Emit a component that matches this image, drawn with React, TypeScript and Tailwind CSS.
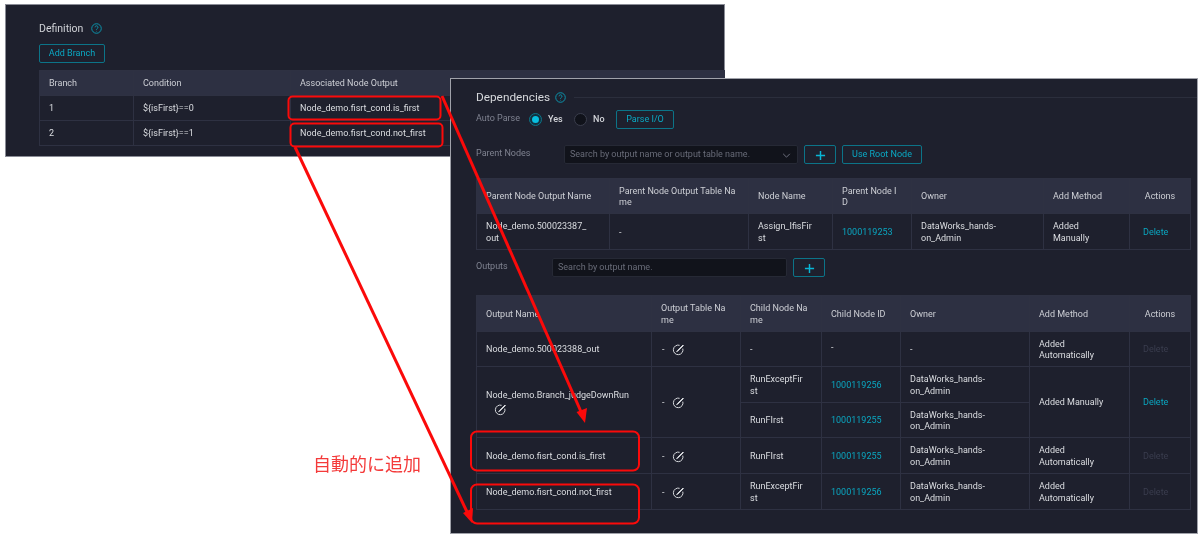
import React from 'react';

const font = "font-['Roboto','Liberation_Sans',sans-serif]";
const th = 'border border-[#2e3142] bg-[#2d3042] px-[9px] pt-[2px] text-left align-middle font-normal text-[#cdcfd5] whitespace-pre-line';
const td = 'border border-[#2e3142] px-[9px] pt-[2px] text-left align-middle text-[#dcdee2] whitespace-pre-line';
const btn = 'flex items-center justify-center rounded-[2px] border border-[#0c7488] pt-[1px] text-[#0aa9c4]';

const Help = ({ className }: { className: string }) => (
  <svg viewBox="0 0 12 12" className={className} fill="none" stroke="#0a9db6" strokeWidth="1">
    <circle cx="6" cy="6" r="5.2" />
    <path d="M4.4 4.7a1.6 1.6 0 1 1 2.4 1.4c-.5.3-.8.6-.8 1.2" />
    <circle cx="6" cy="8.9" r=".5" fill="#0a9db6" stroke="none" />
  </svg>
);

const Plus = () => (
  <svg viewBox="0 0 12 12" className="h-[11px] w-[11px]" stroke="#08b6d6" strokeWidth="1.6">
    <path d="M6 1v10M1 6h10" />
  </svg>
);

const Edit = () => (
  <svg viewBox="0 0 12 12" className="inline-block h-[12px] w-[12px]" fill="none" stroke="#d6d8dc">
    <path d="M7.6 1.3A4.8 4.8 0 1 0 10.8 4.6" strokeWidth="1" />
    <path d="M11 1 5.6 6.4 4.6 7.6 5.9 7 11.4 1.6Z" strokeWidth="1" fill="#d6d8dc" />
  </svg>
);

const Dash = () => (
  <span className="flex items-center gap-[7px] pl-[1px]">
    -
    <Edit />
  </span>
);

const Del = ({ off }: { off?: boolean }) => <span className={off ? 'text-[#3a3d4e]' : 'text-[#0aa6c0]'}>Delete</span>;
const Id = ({ v }: { v: string }) => <span className="text-[#0aa6c0]">{v}</span>;

const Radio = ({ on }: { on?: boolean }) => (
  <span className={`flex h-[13px] w-[13px] items-center justify-center rounded-full border ${on ? 'border-[#0c7488] bg-[#12313f]' : 'border-[#3a3d4c] bg-[#10121a]'}`}>
    {on && <span className="h-[7px] w-[7px] rounded-full bg-[#08bfe0]" />}
  </span>
);

export default function App() {
  return (
    <div className={`relative h-[537px] w-[1200px] overflow-hidden bg-white text-[9px] leading-[11.5px] blur-[0.3px] ${font}`}>
      {/* back window */}
      <div className="absolute left-[5px] top-[4px] h-[153px] w-[720px] border border-[#8a8c96] bg-[#1e202d] pl-[33px] pt-[17px]">
        <div className="flex h-[14px] items-center gap-[8px] text-[10.5px] text-[#d0d2d7]">
          Definition
          <Help className="-mt-[2px] h-[11px] w-[11px]" />
        </div>
        <div className={`${btn} mt-[8px] h-[19px] w-[66px]`}>Add Branch</div>
        <table className="mt-[7px] w-[686px] table-fixed border-collapse">
          <colgroup>
            <col className="w-[94px]" />
            <col className="w-[157px]" />
            <col className="w-[307px]" />
            <col />
          </colgroup>
          <thead>
            <tr className="h-[25px]">
              <th className={th}>Branch</th>
              <th className={th}>Condition</th>
              <th className={th}>Associated Node Output</th>
              <th className={th}></th>
            </tr>
          </thead>
          <tbody>
            <tr className="h-[25px]">
              <td className={td}>1</td>
              <td className={td}>{'${isFirst}==0'}</td>
              <td className={td}>Node_demo.fisrt_cond.is_first</td>
              <td className={td}></td>
            </tr>
            <tr className="h-[25px]">
              <td className={td}>2</td>
              <td className={td}>{'${isFirst}==1'}</td>
              <td className={td}>Node_demo.fisrt_cond.not_first</td>
              <td className={td}></td>
            </tr>
          </tbody>
        </table>
      </div>

      {/* front window */}
      <div className="absolute left-[450px] top-[78px] h-[456px] w-[748px] border border-[#a0a2aa] bg-[#1e202d] pl-[25px]">
        <div className="flex h-[31px] items-center pt-[6px]">
          <span className="text-[11.8px] text-[#d6d8dc]">Dependencies</span>
          <Help className="ml-[5px] h-[11px] w-[11px]" />
          <span className="ml-[8px] h-px flex-1 bg-[#2b2e3c]" />
        </div>
        <div className="flex h-[19px] items-center text-[#d2d4d9]">
          <span className="w-[53px] pb-[2px] text-[#7f8290]">Auto Parse</span>
          <Radio on />
          <span className="ml-[6px] w-[26px] pt-[1px] font-medium">Yes</span>
          <Radio />
          <span className="ml-[6px] w-[23px] pt-[1px] font-medium">No</span>
          <span className={`${btn} h-[19px] w-[58px]`}>Parse I/O</span>
        </div>
        <div className="mt-[16px] flex h-[19px] items-center">
          <span className="w-[88px] pb-[2px] text-[#7f8290]">Parent Nodes</span>
          <span className="flex h-[19px] w-[234px] items-center justify-between rounded-[2px] border border-[#262935] bg-[#11131b] px-[5px] pt-[1px] text-[#686b78]">
            Search by output name or output table name.
            <svg viewBox="0 0 10 6" className="mr-[1px] h-[5px] w-[9px]" fill="none" stroke="#7f8290">
              <path d="M1 1l4 4 4-4" />
            </svg>
          </span>
          <span className={`${btn} ml-[6px] h-[19px] w-[32px]`}><Plus /></span>
          <span className={`${btn} ml-[6px] h-[19px] w-[80px]`}>Use Root Node</span>
        </div>
        <table className="mt-[14px] w-[714px] table-fixed border-collapse">
          <colgroup>
            <col className="w-[133px]" />
            <col className="w-[139px]" />
            <col className="w-[84px]" />
            <col className="w-[79px]" />
            <col className="w-[132px]" />
            <col className="w-[86px]" />
            <col className="w-[61px]" />
          </colgroup>
          <thead>
            <tr className="h-[35px]">
              <th className={th}>Parent Node Output Name</th>
              <th className={th}>{'Parent Node Output Table Na\nme'}</th>
              <th className={th}>Node Name</th>
              <th className={th}>{'Parent Node I\nD'}</th>
              <th className={th}>Owner</th>
              <th className={th}>Add Method</th>
              <th className={`${th} !text-center`}>Actions</th>
            </tr>
          </thead>
          <tbody>
            <tr className="h-[36px]">
              <td className={td}>{'Node_demo.500023387_\nout'}</td>
              <td className={td}>-</td>
              <td className={td}>{'Assign_IfisFir\nst'}</td>
              <td className={td}><Id v="1000119253" /></td>
              <td className={td}>{'DataWorks_hands-\non_Admin'}</td>
              <td className={td}>{'Added\nManually'}</td>
              <td className={`${td} !pl-[13px]`}><Del /></td>
            </tr>
          </tbody>
        </table>
        <div className="mt-[8px] flex h-[19px] items-center">
          <span className="w-[76px] pb-[2px] text-[#7f8290]">Outputs</span>
          <span className="flex h-[19px] w-[235px] items-center rounded-[2px] border border-[#262935] bg-[#11131b] px-[5px] pt-[1px] text-[#686b78]">
            Search by output name.
          </span>
          <span className={`${btn} ml-[6px] h-[19px] w-[32px]`}><Plus /></span>
        </div>
        <table className="mt-[18px] w-[714px] table-fixed border-collapse">
          <colgroup>
            <col className="w-[175px]" />
            <col className="w-[89px]" />
            <col className="w-[81px]" />
            <col className="w-[79px]" />
            <col className="w-[129px]" />
            <col className="w-[100px]" />
            <col className="w-[61px]" />
          </colgroup>
          <thead>
            <tr className="h-[36px]">
              <th className={th}>Output Name</th>
              <th className={th}>{'Output Table Na\nme'}</th>
              <th className={th}>{'Child Node Na\nme'}</th>
              <th className={th}>Child Node ID</th>
              <th className={th}>Owner</th>
              <th className={th}>Add Method</th>
              <th className={`${th} !text-center`}>Actions</th>
            </tr>
          </thead>
          <tbody>
            <tr className="h-[35px]">
              <td className={td}>Node_demo.500023388_out</td>
              <td className={td}><Dash /></td>
              <td className={td}>-</td>
              <td className={`${td} !pb-[5px]`}>-</td>
              <td className={td}>-</td>
              <td className={td}>{'Added\nAutomatically'}</td>
              <td className={`${td} !pl-[13px]`}><Del off /></td>
            </tr>
            <tr className="h-[36px]">
              <td rowSpan={2} className={td}>
                Node_demo.Branch_judgeDownRun
                <div className="mt-[2px] pl-[8px]"><Edit /></div>
              </td>
              <td rowSpan={2} className={td}><Dash /></td>
              <td className={td}>{'RunExceptFir\nst'}</td>
              <td className={td}><Id v="1000119256" /></td>
              <td className={td}>{'DataWorks_hands-\non_Admin'}</td>
              <td rowSpan={2} className={td}>Added Manually</td>
              <td rowSpan={2} className={`${td} !pl-[13px]`}><Del /></td>
            </tr>
            <tr className="h-[35px]">
              <td className={td}>RunFIrst</td>
              <td className={td}><Id v="1000119255" /></td>
              <td className={td}>{'DataWorks_hands-\non_Admin'}</td>
            </tr>
            <tr className="h-[36px]">
              <td className={td}>Node_demo.fisrt_cond.is_first</td>
              <td className={td}><Dash /></td>
              <td className={td}>RunFIrst</td>
              <td className={td}><Id v="1000119255" /></td>
              <td className={td}>{'DataWorks_hands-\non_Admin'}</td>
              <td className={td}>{'Added\nAutomatically'}</td>
              <td className={`${td} !pl-[13px]`}><Del off /></td>
            </tr>
            <tr className="h-[36px]">
              <td className={td}>Node_demo.fisrt_cond.not_first</td>
              <td className={td}><Dash /></td>
              <td className={td}>{'RunExceptFir\nst'}</td>
              <td className={td}><Id v="1000119256" /></td>
              <td className={td}>{'DataWorks_hands-\non_Admin'}</td>
              <td className={td}>{'Added\nAutomatically'}</td>
              <td className={`${td} !pl-[13px]`}><Del off /></td>
            </tr>
          </tbody>
        </table>
      </div>

      {/* red annotations */}
      <svg className="pointer-events-none absolute left-0 top-0 h-[537px] w-[1200px]" viewBox="0 0 1200 537" fill="none" stroke="#fb0a0a">
        <rect x="288.5" y="96.5" width="152" height="23" rx="4" strokeWidth="2" />
        <rect x="290.5" y="123.5" width="152" height="23" rx="4" strokeWidth="2" />
        <rect x="471" y="431.5" width="168" height="39" rx="6" strokeWidth="2" />
        <rect x="471" y="484.5" width="168" height="39" rx="6" strokeWidth="2" />
        <path d="M442 96 582 414" strokeWidth="3" />
        <path d="M585 423 576.5 412 587 408Z" fill="#fb0a0a" stroke="none" />
        <path d="M295 147 468 514" strokeWidth="3" />
        <path d="M472 523 463 513 473 508Z" fill="#fb0a0a" stroke="none" />
      </svg>
      <span className="absolute left-[313px] top-[451px] font-['Noto_Sans_CJK_JP',sans-serif] text-[18px] leading-[24px] text-[#f43a3a]">
        自動的に追加
      </span>
    </div>
  );
}
